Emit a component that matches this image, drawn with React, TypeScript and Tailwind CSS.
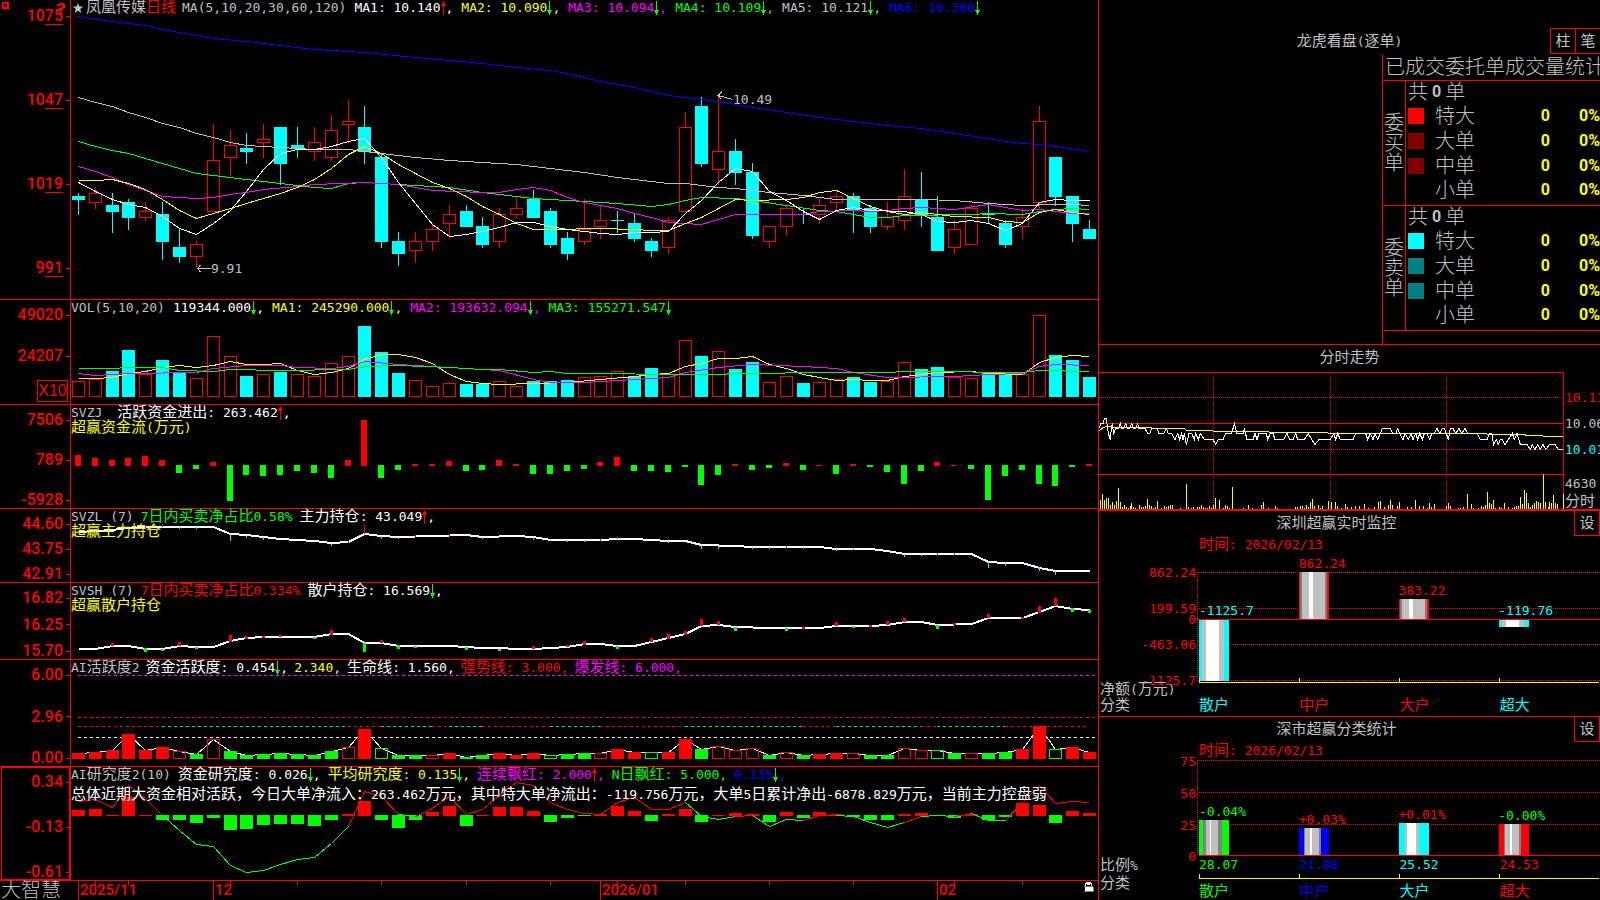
import React from 'react'

// Horizontal layout of the k-line charts
const LEFT = 71
const WIDTH = 1027
const X = (i: number) => Math.floor(78.44 + 16.852 * i)

const RED = '#ff0000'
const GREEN = '#00ff00'
const CYAN = '#00ffff'
const YELLOW = '#ffff00'
const MAGENTA = '#ff00ff'
const BLUE = '#0000ff'
const SILVER = '#c0c0c0'
const GRAY = '#808080'
const WHITE = '#ffffff'

// r = rising (hollow), c = falling (solid)
const CANDLE_DIR = 'crccrccrrrcrccrrrcccrrrccrrcccrrcccrrcrccrrcrrccrrccrrccrrccc'
const VOLUME_DIR = CANDLE_DIR.split('').map((d, i) => (i === 0 || i === 13 || i === 32 ? 'r' : d))

// high, body top, body bottom, low
const CANDLES = [
  [193, 196, 200, 215], [187, 193, 203, 209], [193, 205, 212, 233], [199, 202, 218, 230], [202, 211, 218, 221],
  [202, 214, 242, 260], [229, 247, 257, 263], [241, 244, 257, 268], [124, 160, 212, 212], [130, 145, 158, 176],
  [133, 148, 152, 164], [124, 139, 143, 158], [127, 127, 164, 185], [127, 145, 149, 158], [127, 142, 152, 161],
  [115, 130, 158, 161], [100, 121, 125, 143], [106, 127, 152, 164], [154, 157, 242, 248], [232, 241, 254, 266],
  [232, 241, 251, 263], [223, 229, 242, 251], [205, 214, 224, 239], [205, 211, 227, 227], [217, 226, 245, 248],
  [208, 214, 242, 248], [196, 208, 215, 218], [190, 199, 218, 218], [208, 211, 245, 248], [232, 238, 254, 260],
  [199, 229, 242, 245], [206, 220, 227, 239], [211, 220, 221, 233], [214, 223, 239, 242], [238, 241, 251, 257],
  [217, 220, 248, 254], [112, 127, 212, 212], [97, 106, 164, 167], [95, 151, 170, 185], [139, 151, 173, 185],
  [163, 172, 236, 239], [226, 226, 242, 248], [206, 208, 227, 236], [208, 214, 215, 224], [199, 205, 215, 224],
  [193, 196, 203, 211], [193, 196, 211, 233], [205, 208, 227, 233], [202, 217, 227, 230], [169, 196, 221, 230],
  [172, 199, 215, 227], [196, 217, 251, 251], [220, 229, 248, 254], [205, 208, 245, 245], [202, 214, 215, 223],
  [220, 223, 245, 248], [208, 217, 227, 239], [106, 121, 203, 208], [157, 157, 197, 206], [196, 196, 224, 242],
  [220, 229, 239, 239],
]

const VOLUMES = [
  381, 379, 371, 350, 374, 360, 373, 378, 336, 356, 376, 374, 372, 374, 376, 363, 356, 326, 352, 373, 380, 386, 383,
  384, 384, 381, 386, 381, 381, 380, 377, 376, 371, 376, 368, 374, 340, 356, 351, 369, 362, 382, 376, 383, 382, 379,
  377, 382, 381, 362, 369, 367, 377, 378, 372, 372, 374, 315, 355, 360, 377,
]

const FLOW = [
  455, 458, 460, 458, 456, 460, 473, 469, 462, 501, 475, 476, 475, 471, 473, 478, 460, 420, 478, 470, 464, 464, 461,
  471, 470, 460, 464, 474, 474, 471, 469, 462, 457, 471, 471, 472, 467, 485, 475, 464, 470, 468, 463, 470, 465, 474,
  464, 467, 472, 484, 471, 462, 465, 469, 500, 476, 470, 484, 486, 467, 464,
]

// R / G solid, r / g outlined
const ACTIVE_KIND = 'RRRRRRrGrGGGGGGGrRgGGrRGGRRRgGGrRRgRRGrrrGrGRRrGGrrgGrGGRRgRR'
const ACTIVE = [
  753, 752, 750, 734, 750, 747, 751, 754, 739, 751, 755, 754, 753, 754, 755, 751, 747, 729, 748, 755, 755, 755, 753,
  757, 755, 753, 755, 753, 755, 754, 753, 753, 749, 752, 752, 752, 739, 749, 746, 750, 748, 755, 752, 755, 754, 753,
  753, 755, 755, 748, 750, 750, 753, 753, 753, 752, 749, 726, 749, 747, 752,
]

const RESEARCH = [
  810, 809, 815, 797, 815, 820, 820, 823, 818, 830, 829, 825, 824, 824, 826, 820, 814, 801, 820, 828, 820, 812, 806,
  826, 815, 807, 807, 811, 822, 818, 816, 814, 806, 811, 821, 814, 809, 822, 815, 813, 814, 822, 812, 818, 812, 814,
  817, 820, 820, 814, 813, 816, 818, 814, 820, 817, 803, 805, 823, 811, 813,
]
const RESEARCH_LINE = [
  801, 799, 807, 785, 798, 815, 830, 844, 846, 865, 872, 870, 864, 859, 857, 843, 826, 791, 796, 814, 816, 808, 796,
  814, 809, 795, 782, 785, 802, 809, 813, 814, 802, 797, 809, 809, 802, 816, 819, 816, 815, 826, 819, 820, 815, 815,
  816, 822, 827, 822, 816, 815, 816, 813, 820, 820, 802, 785, 803, 801, 802,
]

type Pair = [number, number]

const MA: { color: string; points: Pair[] }[] = [
  {
    color: BLUE,
    points: [[0, 16], [2, 21], [4, 25], [5, 29], [6, 32], [7, 35], [8, 38], [10, 41], [12, 45], [14, 49], [17, 52], [20, 57], [22, 60], [24, 63], [26, 67], [28, 70], [29, 73], [31, 81], [33, 87], [35, 95], [36, 97], [37, 99], [38, 101], [40, 107], [42, 112], [44, 117], [46, 121], [48, 125], [50, 128], [52, 133], [54, 138], [55, 141], [56, 143], [57, 144], [58, 146], [60, 151]],
  },
  {
    color: SILVER,
    points: [[0, 97], [1, 102], [2, 106], [3, 112], [4, 117], [5, 123], [6, 127], [7, 133], [8, 137], [9, 142], [10, 145], [12, 147], [14, 149], [16, 149], [17, 151], [18, 153], [20, 157], [22, 160], [24, 162], [26, 164], [28, 168], [30, 172], [32, 177], [34, 181], [35, 183], [36, 183], [38, 187], [39, 188], [41, 192], [43, 195], [45, 199], [50, 199], [52, 200], [54, 203], [56, 205], [58, 204], [59, 204], [60, 205]],
  },
  {
    color: GREEN,
    points: [[0, 141], [1, 146], [2, 150], [3, 153], [4, 158], [5, 163], [6, 168], [7, 173], [8, 175], [10, 179], [12, 183], [14, 187], [15, 188], [16, 183], [17, 182], [18, 183], [20, 185], [22, 187], [24, 192], [26, 196], [27, 198], [28, 199], [30, 201], [32, 203], [34, 206], [35, 204], [36, 200], [37, 197], [39, 198], [40, 200], [42, 205], [44, 210], [45, 211], [46, 214], [47, 217], [48, 217], [49, 215], [53, 214], [54, 213], [56, 214], [57, 211], [58, 209], [59, 208], [60, 209]],
  },
  {
    color: MAGENTA,
    points: [[0, 166], [1, 171], [2, 177], [3, 184], [4, 190], [5, 196], [6, 197], [7, 198], [8, 197], [9, 194], [10, 192], [11, 189], [13, 186], [14, 184], [17, 182], [19, 184], [21, 190], [24, 192], [25, 192], [26, 189], [27, 187], [28, 190], [29, 197], [30, 202], [32, 208], [33, 213], [34, 217], [35, 222], [37, 224], [38, 219], [39, 214], [43, 214], [44, 211], [46, 210], [47, 211], [48, 210], [49, 208], [50, 207], [52, 209], [54, 204], [55, 207], [56, 210], [57, 209], [58, 211], [59, 213], [60, 213]],
  },
  {
    color: YELLOW,
    points: [[0, 180], [1, 180], [2, 179], [3, 183], [4, 189], [5, 199], [6, 210], [7, 218], [8, 213], [9, 208], [10, 203], [11, 198], [12, 193], [13, 187], [14, 179], [15, 168], [16, 154], [17, 146], [18, 153], [19, 164], [20, 173], [21, 182], [22, 188], [23, 196], [24, 206], [25, 214], [26, 223], [27, 229], [29, 229], [30, 228], [31, 228], [33, 229], [34, 230], [35, 230], [36, 223], [37, 217], [38, 208], [39, 199], [40, 200], [42, 199], [43, 197], [44, 192], [45, 190], [46, 198], [47, 206], [48, 211], [49, 214], [50, 212], [51, 214], [52, 216], [54, 217], [55, 221], [56, 222], [57, 212], [58, 209], [59, 212], [60, 214]],
  },
  {
    color: WHITE,
    points: [[0, 182], [1, 191], [2, 199], [3, 204], [4, 207], [5, 216], [6, 228], [7, 234], [8, 223], [9, 210], [10, 191], [11, 169], [12, 153], [13, 149], [14, 149], [15, 146], [16, 141], [17, 138], [18, 157], [19, 182], [20, 203], [21, 224], [22, 236], [23, 234], [24, 231], [25, 227], [26, 222], [27, 222], [28, 226], [29, 229], [30, 231], [31, 233], [32, 234], [33, 232], [34, 232], [35, 231], [36, 213], [37, 200], [38, 182], [39, 168], [40, 171], [41, 191], [42, 200], [43, 211], [44, 219], [45, 210], [46, 207], [47, 210], [49, 211], [50, 214], [51, 221], [52, 222], [53, 220], [54, 223], [55, 230], [56, 223], [57, 202], [58, 199], [59, 200], [60, 200]],
  },
]

const VOLUME_MA: { color: string; points: Pair[] }[] = [
  {
    color: YELLOW,
    points: [[0, 378], [1, 378], [2, 377], [3, 373], [4, 371], [5, 367], [6, 365], [7, 367], [8, 365], [9, 361], [10, 364], [11, 364], [12, 363], [13, 370], [14, 374], [15, 372], [16, 368], [17, 359], [18, 354], [19, 354], [20, 357], [21, 363], [22, 374], [23, 381], [24, 383], [25, 384], [27, 383], [29, 382], [31, 379], [33, 376], [34, 374], [35, 373], [36, 366], [37, 363], [38, 358], [39, 358], [40, 356], [41, 364], [42, 368], [43, 374], [44, 377], [45, 380], [46, 379], [47, 380], [48, 380], [49, 376], [50, 374], [51, 372], [53, 371], [54, 373], [56, 374], [57, 362], [58, 357], [59, 355], [60, 356]],
  },
  {
    color: MAGENTA,
    points: [[0, 373], [1, 375], [3, 373], [7, 372], [8, 368], [10, 365], [12, 365], [13, 367], [15, 368], [16, 366], [17, 361], [19, 364], [22, 367], [24, 369], [25, 370], [27, 379], [28, 382], [30, 382], [32, 380], [34, 378], [35, 377], [36, 372], [38, 367], [40, 364], [43, 366], [45, 368], [46, 372], [48, 377], [52, 376], [54, 374], [56, 373], [57, 366], [58, 364], [60, 365]],
  },
  {
    color: GREEN,
    points: [[0, 368], [2, 368], [3, 367], [5, 367], [6, 370], [8, 371], [9, 369], [12, 370], [16, 369], [17, 366], [19, 365], [22, 367], [24, 369], [25, 369], [27, 372], [28, 371], [29, 373], [37, 374], [40, 373], [44, 372], [47, 372], [50, 371], [56, 372], [57, 370], [60, 371]],
  },
]

const MAIN_HOLD: Pair[] = [[0, 532], [2, 530], [3, 528], [4, 527], [8, 527], [9, 534], [10, 535], [12, 539], [14, 541], [15, 543], [16, 542], [17, 534], [18, 536], [19, 537], [21, 536], [23, 535], [24, 537], [26, 536], [27, 537], [28, 540], [31, 540], [32, 539], [33, 539], [35, 541], [36, 541], [37, 545], [39, 546], [40, 547], [44, 547], [45, 549], [47, 549], [48, 551], [49, 554], [53, 554], [54, 562], [55, 563], [56, 563], [57, 568], [58, 571], [60, 571]]
const MAIN_TICKS: [number, number, number, string][] = [
  [1, 531, 532, RED], [4, 525, 528, RED], [5, 524, 527, RED], [6, 527, 529, CYAN], [7, 527, 529, CYAN],
  [9, 534, 541, CYAN], [10, 535, 538, CYAN], [11, 537, 540, CYAN], [15, 543, 546, CYAN], [16, 541, 543, RED],
  [17, 525, 534, RED], [18, 536, 539, CYAN], [19, 537, 539, CYAN], [20, 535, 537, RED], [22, 534, 536, RED],
  [24, 537, 539, CYAN], [27, 537, 540, CYAN], [28, 539, 541, CYAN], [29, 540, 542, CYAN], [30, 540, 542, CYAN],
  [31, 539, 541, RED], [32, 536, 539, RED], [35, 541, 543, CYAN], [37, 545, 549, CYAN], [38, 546, 549, CYAN],
  [40, 547, 549, CYAN], [41, 547, 549, CYAN], [42, 546, 548, RED], [43, 547, 549, CYAN], [45, 549, 551, CYAN],
  [46, 549, 550, RED], [49, 554, 557, CYAN], [50, 554, 556, CYAN], [51, 553, 555, RED], [52, 553, 555, RED],
  [54, 561, 568, CYAN], [55, 563, 566, CYAN], [57, 567, 571, CYAN], [58, 571, 575, CYAN],
]

const RETAIL_HOLD: Pair[] = [[0, 649], [1, 649], [2, 646], [3, 646], [4, 649], [5, 649], [6, 646], [7, 647], [8, 647], [9, 641], [10, 638], [11, 637], [14, 637], [15, 634], [16, 634], [17, 643], [18, 643], [19, 646], [22, 646], [24, 648], [27, 649], [28, 648], [29, 647], [30, 644], [31, 644], [32, 646], [33, 646], [34, 642], [35, 638], [36, 634], [37, 626], [38, 625], [39, 627], [41, 628], [44, 628], [45, 626], [47, 626], [48, 625], [49, 622], [50, 622], [51, 625], [53, 624], [54, 618], [56, 618], [57, 612], [58, 606], [59, 609], [60, 610]]
const RETAIL_TICKS: [number, number, number, string][] = [
  [2, 643, 646, RED], [4, 648, 652, GREEN], [5, 649, 651, GREEN], [6, 642, 646, RED], [7, 647, 649, GREEN],
  [9, 635, 642, RED], [10, 636, 639, RED], [11, 636, 638, RED], [12, 635, 637, RED], [14, 637, 639, GREEN],
  [15, 630, 635, RED], [17, 643, 652, GREEN], [18, 640, 643, RED], [19, 645, 649, GREEN], [20, 646, 648, GREEN],
  [23, 647, 650, GREEN], [25, 649, 651, GREEN], [27, 646, 649, RED], [29, 645, 647, RED], [30, 641, 645, RED],
  [32, 646, 649, GREEN], [34, 638, 642, RED], [35, 634, 639, RED], [36, 631, 635, RED], [37, 619, 626, RED],
  [38, 621, 625, RED], [39, 627, 631, GREEN], [42, 628, 631, GREEN], [43, 627, 629, RED], [45, 622, 626, RED],
  [46, 626, 628, GREEN], [47, 625, 627, RED], [48, 621, 625, RED], [49, 618, 622, RED], [51, 625, 629, GREEN],
  [52, 623, 625, RED], [54, 614, 618, RED], [56, 617, 619, RED], [57, 606, 613, RED], [58, 598, 606, RED],
  [59, 608, 612, GREEN], [60, 610, 613, GREEN],
]

// colour changes of the middle dashed line
const SWITCHES: [number, number, string][] = [
  [0, 5, RED], [5, 16, GREEN], [16, 18, RED], [18, 21, GREEN], [21, 22, RED], [22, 24, GREEN], [24, 28, RED],
  [28, 31, GREEN], [31, 36, RED], [36, 43, GREEN], [43, 45, RED], [45, 50, GREEN], [50, 51, RED], [51, 55, GREEN],
  [55, 60, RED],
]

const GREEN_SPANS: Pair[] = [[5, 16], [19, 20], [36, 39], [40, 43], [45, 49], [50, 52], [53, 55]]

const INTRADAY: Pair[] = [[11, 5], [18, 6], [25, 6], [28, 7], [34, 7], [36, 6], [40, 4], [46, 3], [49, 5], [52, 6], [56, 4], [62, 5], [70, 5], [76, 6], [80, 5], [86, 5], [92, 6], [98, 5], [104, 5], [110, 6], [116, 5], [122, 5], [128, 6], [132, 5], [150, 5], [158, 4], [164, 4], [170, 5], [186, 5], [192, 4], [206, 4], [214, 5], [220, 4], [230, 4], [240, 3], [248, 4], [254, 3], [260, 4], [264, 3], [268, 4], [274, 2], [282, 4], [290, 4], [298, 3], [302, 4], [310, 3], [316, 4], [328, 3], [354, 3], [362, 2], [370, 3], [384, 3], [392, 4], [410, 4], [418, 6], [426, 4], [434, 4], [444, 4], [448, 5], [456, 3], [474, 3], [480, 4], [486, 3], [492, 4], [514, 4], [518, 3], [526, 4], [534, 4], [540, 3], [566, 3], [576, 4], [584, 3], [594, 3], [602, 4], [608, 3], [628, 3], [640, 4], [650, 3], [660, 2], [672, 3], [706, 3], [716, 4], [722, 3], [728, 4], [736, 3], [774, 3], [782, 4], [812, 4], [818, 3], [826, 4], [834, 3], [840, 4], [848, 3], [856, 4], [862, 5], [886, 5], [894, 4], [902, 4], [908, 5], [914, 4], [924, 3], [930, 4], [940, 3], [948, 4], [954, 3], [962, 4], [968, 3], [974, 4], [982, 3], [988, 4], [996, 4], [1004, 3], [1010, 4], [1018, 4], [1026, 5], [1034, 4], [1042, 5], [1048, 5], [1054, 4], [1060, 3], [1066, 5], [1074, 5], [1082, 4], [1092, 5], [1100, 4], [1110, 5], [1118, 4], [1146, 4], [1156, 3], [1176, 3], [1184, 4], [1190, 4], [1196, 2], [1204, 3], [1210, 2], [1216, 3], [1222, 3], [1230, 2], [1240, 3], [1252, 4], [1258, 3], [1266, 4], [1276, 2], [1296, 2], [1306, 1], [1312, 2], [1320, 1], [1328, 2], [1336, 1], [1344, 2], [1352, 1], [1364, 2], [1380, 2], [1390, 1], [1404, 1]]
const AVERAGE: Pair[] = [[11, 275], [24, 262], [36, 258], [60, 262], [168, 262], [172, 265], [268, 265], [276, 271], [352, 271], [358, 274], [520, 274], [524, 277], [698, 277], [702, 280], [1174, 280], [1178, 283], [1290, 283], [1294, 287], [1342, 287], [1346, 289], [1404, 289]]
const MINUTE_VOLUME: Pair[] = [[16, 480], [22, 462], [28, 480], [34, 474], [40, 474], [46, 495], [52, 486], [58, 495], [64, 483], [70, 444], [76, 486], [82, 501], [88, 495], [94, 501], [100, 504], [106, 498], [109, 489], [116, 501], [122, 504], [134, 495], [140, 501], [146, 501], [152, 498], [158, 477], [164, 495], [170, 498], [176, 504], [182, 501], [188, 483], [200, 504], [208, 498], [214, 501], [220, 498], [226, 495], [232, 495], [256, 504], [274, 432], [280, 501], [290, 504], [296, 501], [306, 501], [312, 501], [319, 495], [325, 501], [331, 504], [337, 504], [343, 498], [349, 504], [355, 495], [361, 474], [373, 480], [385, 504], [391, 495], [397, 498], [403, 504], [413, 441], [445, 504], [460, 495], [472, 504], [500, 496], [505, 486], [520, 504], [541, 498], [547, 504], [601, 501], [607, 501], [615, 498], [622, 498], [628, 504], [634, 495], [640, 501], [646, 486], [652, 477], [658, 498], [670, 495], [676, 504], [682, 498], [700, 483], [709, 486], [721, 486], [727, 498], [738, 504], [750, 492], [758, 501], [768, 501], [780, 498], [792, 498], [808, 492], [820, 504], [838, 501], [850, 486], [856, 483], [868, 501], [880, 495], [886, 480], [892, 495], [908, 498], [914, 486], [938, 501], [950, 501], [962, 480], [974, 498], [986, 498], [998, 504], [1004, 489], [1010, 501], [1018, 492], [1054, 498], [1060, 489], [1066, 498], [1090, 504], [1096, 504], [1105, 501], [1117, 462], [1130, 492], [1136, 504], [1150, 504], [1160, 498], [1166, 501], [1172, 495], [1177, 456], [1183, 489], [1189, 492], [1195, 480], [1201, 504], [1213, 501], [1219, 504], [1229, 489], [1240, 501], [1252, 504], [1258, 501], [1264, 498], [1270, 498], [1276, 471], [1282, 492], [1288, 450], [1294, 459], [1300, 489], [1306, 501], [1312, 495], [1318, 489], [1324, 483], [1330, 486], [1336, 489], [1345, 402], [1351, 486], [1360, 501], [1363, 486], [1369, 489], [1375, 465], [1381, 489], [1387, 492], [1404, 462]]

// Chinese glyphs are larger than the monospace ones next to them
const Txt = ({ children, className = '' }: { children: string; className?: string }) => (
  <span className={`whitespace-pre ${className}`}>
    {children.split(/([\x20-\x7f]+)/).map((part, i) =>
      i % 2 ? (
        <span key={i} className="text-[13px]">
          {part}
        </span>
      ) : (
        part
      ),
    )}
  </span>
)

const Arrow = ({ up = false }: { up?: boolean }) => (
  <svg width="5" height="14" viewBox="0 0 5 14" className="shrink-0" shapeRendering="crispEdges">
    {up ? (
      <path d="M2 0h1v14h-1zM1 2h3v2h-3zM0 4h5v1h-5z" fill={RED} />
    ) : (
      <path d="M2 0h1v14h-1zM0 9h5v1h-5zM1 10h3v2h-3z" fill={GREEN} />
    )}
  </svg>
)

const Reading = ({
  text,
  color,
  arrow,
  last,
}: {
  text: string
  color: string
  arrow: 'up' | 'down'
  last?: boolean
}) => (
  <span className={`flex items-center ${color}`}>
    <Txt>{text}</Txt>
    <Arrow up={arrow === 'up'} />
    {!last && <Txt>,</Txt>}
  </span>
)

const Header = ({ children }: { children: React.ReactNode }) => (
  <div className="absolute inset-x-0 top-0 flex flex-col text-[15px] leading-[15px]">{children}</div>
)

const Line = ({ points, color, width = 1 }: { points: Pair[]; color: string; width?: number }) => (
  <polyline
    points={points.map(([i, y]) => `${X(i) + 0.5},${width === 2 ? y : y + 0.5}`).join(' ')}
    fill="none"
    stroke={color}
    strokeWidth={width}
  />
)

const Bar = ({ i, top, bottom, color, hollow }: { i: number; top: number; bottom: number; color: string; hollow?: boolean }) =>
  hollow ? (
    <rect x={X(i) - 5.5} y={top + 0.5} width={12} height={Math.max(bottom - top - 1, 1)} fill="none" stroke={color} />
  ) : (
    <rect x={X(i) - 6} y={top} width={13} height={Math.max(bottom - top, 1)} fill={color} />
  )

const AxisLabel = ({ text, underline }: { text: string; underline?: boolean }) => (
  <div className="relative flex h-4 items-center justify-end gap-[3px] font-['Roboto',sans-serif] text-base leading-4 font-medium text-[#ff0000]">
    {text}
    <i className="h-px w-1 bg-[#ff0000]" />
    {underline && <i className="absolute right-[7px] -bottom-px h-px w-[18px] bg-[#ff0000]" />}
  </div>
)

const Panel = ({
  top,
  height,
  className,
  axis,
  axisClass,
  header,
  label,
  children,
}: {
  top: number
  height: number
  className: string
  axis: React.ReactNode
  axisClass: string
  header: React.ReactNode
  label: string
  children: React.ReactNode
}) => (
  <section aria-label={label} className={`flex shrink-0 border-b border-[#ff0000] ${className}`}>
    <div className={`relative flex w-[71px] shrink-0 flex-col border-r border-[#ff0000] ${axisClass}`}>{axis}</div>
    <div className="relative min-w-0 flex-1">
      <svg
        className="block h-full w-full"
        viewBox={`${LEFT} ${top} ${WIDTH} ${height}`}
        preserveAspectRatio="none"
        shapeRendering="crispEdges"
      >
        {children}
      </svg>
      {header}
    </div>
  </section>
)

const MainChart = () => (
  <Panel
    label="日线"
    top={0}
    height={299}
    className="h-[300px]"
    axisClass="justify-between pt-2 pb-[23px]"
    axis={
      <>
        <svg className="absolute top-0 left-0" width="68" height="14" shapeRendering="crispEdges">
          <path d="M2 2h7v7h-7zM4 4v3h3v-3z" fillRule="evenodd" fill={RED} />
          <path d="M9 8h1v1h-1zM3 9h2v1h-2zM8 9h1v1h-1z" fill="#a00000" />
          <path d="M57 4h2v-1h5v1h1v4h-2v1h-2v2h-2v-3h2v-1h1v-2h-2v1h-3zM59 12h3v2h-3z" fill={RED} />
          <path d="M65 5h1v3h-1zM63 8h2v1h-2zM61 9h2v2h-2z" fill="#800000" />
        </svg>
        <AxisLabel text="1075" underline />
        <AxisLabel text="1047" underline />
        <AxisLabel text="1019" underline />
        <AxisLabel text="991" underline />
      </>
    }
    header={
      <>
        <Header>
          <div className="flex items-center gap-2">
            <span className="flex items-center pl-px text-[#c0c0c0]">
              <svg width="14" height="12" viewBox="0 0 14 12">
                <path d="M6 1l1.400 3.500h4l-3.200 2.500l1.200 4l-3.400-2.300l-3.400 2.300l1.200-4l-3.200-2.500h4z" fill={SILVER} />
              </svg>
              <Txt>凤凰传媒</Txt>
              <Txt className="text-[#ff0000]">日线</Txt>
              <Txt className="ml-[6px]">MA(5,10,20,30,60,120)</Txt>
            </span>
            <Reading text="MA1: 10.140" color="text-white" arrow="up" />
            <Reading text="MA2: 10.090" color="text-[#ffff00]" arrow="down" />
            <Reading text="MA3: 10.094" color="text-[#ff00ff]" arrow="down" />
            <Reading text="MA4: 10.109" color="text-[#00ff00]" arrow="down" />
            <Reading text="MA5: 10.121" color="text-[#c0c0c0]" arrow="down" />
            <Reading text="MA6: 10.300" color="text-[#0000ff]" arrow="down" last />
          </div>
        </Header>
        <span className="absolute text-[13px] leading-4 text-[#c0c0c0]" style={{ left: `${(14000 / WIDTH).toFixed(2)}%`, top: 261 }}>
          9.91
        </span>
        <span className="absolute text-[13px] leading-4 text-[#c0c0c0]" style={{ left: `${(66200 / WIDTH).toFixed(2)}%`, top: 92 }}>
          10.49
        </span>
      </>
    }
  >
    {CANDLES.map(([high, top, bottom, low], i) => {
      const up = CANDLE_DIR[i] === 'r'
      const color = up ? RED : CYAN
      return (
        <g key={i}>
          <rect x={X(i)} y={high} width={1} height={top - high} fill={color} />
          <rect x={X(i)} y={bottom} width={1} height={low - bottom} fill={color} />
          <Bar i={i} top={top} bottom={bottom} color={color} hollow={up} />
        </g>
      )
    })}
    {MA.map((m) => (
      <Line key={m.color} points={m.points} color={m.color} />
    ))}
    <path d="M197 268.500h14M200.500 265l-3 3.500l3 3.500M718.500 95.500l14 4M722 91.500l-4 4l3.500 4" fill="none" stroke={SILVER} />
  </Panel>
)

const VolumeChart = () => (
  <Panel
    label="VOL"
    top={300}
    height={104}
    className="h-[105px]"
    axisClass="pt-[7px]"
    axis={
      <>
        <AxisLabel text="49020" />
        <div className="mt-[25px]">
          <AxisLabel text="24207" />
        </div>
        <div className="mt-4 mr-[2px] h-[22px] w-[31px] self-end border border-[#ff0000] text-center font-['Liberation_Sans',sans-serif] text-base leading-5 text-[#ff0000]">
          X10
        </div>
      </>
    }
    header={
      <Header>
        <div className="flex items-center gap-2">
          <Txt className="text-[#c0c0c0]">VOL(5,10,20)</Txt>
          <Reading text="119344.000" color="text-white" arrow="down" />
          <Reading text="MA1: 245290.000" color="text-[#ffff00]" arrow="down" />
          <Reading text="MA2: 193632.094" color="text-[#ff00ff]" arrow="down" />
          <Reading text="MA3: 155271.547" color="text-[#00ff00]" arrow="down" last />
        </div>
      </Header>
    }
  >
    {VOLUMES.map((top, i) => (
      <Bar key={i} i={i} top={top} bottom={397} color={VOLUME_DIR[i] === 'r' ? RED : CYAN} hollow={VOLUME_DIR[i] === 'r'} />
    ))}
    {VOLUME_MA.map((m) => (
      <Line key={m.color} points={m.points} color={m.color} />
    ))}
  </Panel>
)

const FlowChart = () => (
  <Panel
    label="SVZJ"
    top={405}
    height={103}
    className="h-[104px]"
    axisClass="justify-between pt-[7px]"
    axis={
      <>
        <AxisLabel text="7506" />
        <AxisLabel text="789" />
        <AxisLabel text="-5928" />
      </>
    }
    header={
      <Header>
        <div className="flex items-center gap-[15px]">
          <Txt className="text-[#c0c0c0]">SVZJ</Txt>
          <Reading text="活跃资金进出: 263.462" color="text-white" arrow="up" />
        </div>
        <Txt className="text-[#ffff00]">超赢资金流(万元)</Txt>
      </Header>
    }
  >
    {FLOW.map((y, i) =>
      y < 466 ? (
        <rect key={i} x={X(i) - 3} y={y} width={6} height={466 - y} fill={RED} />
      ) : (
        <rect key={i} x={X(i) - 3} y={465} width={6} height={y - 465} fill={GREEN} />
      ),
    )}
  </Panel>
)

const MainHoldChart = () => (
  <Panel
    label="SVZL"
    top={509}
    height={73}
    className="h-[74px]"
    axisClass="justify-between pt-[7px]"
    axis={
      <>
        <AxisLabel text="44.60" />
        <AxisLabel text="43.75" />
        <AxisLabel text="42.91" />
      </>
    }
    header={
      <Header>
        <div className="flex items-center gap-[7px]">
          <Txt className="text-[#c0c0c0]">SVZL (7)</Txt>
          <Txt className="text-[#00ff00]">7日内买卖净占比0.58%</Txt>
          <Reading text="主力持仓: 43.049" color="text-white" arrow="up" />
        </div>
        <Txt className="text-[#ffff00]">超赢主力持仓</Txt>
      </Header>
    }
  >
    <Line points={MAIN_HOLD} color={WHITE} width={2} />
    {MAIN_TICKS.map(([i, y1, y2, color]) => (
      <rect key={i} x={X(i)} y={y1} width={1} height={y2 - y1} fill={color} />
    ))}
  </Panel>
)

const RetailHoldChart = () => (
  <Panel
    label="SVSH"
    top={583}
    height={76}
    className="h-[77px]"
    axisClass="justify-between pt-[7px]"
    axis={
      <>
        <AxisLabel text="16.82" />
        <AxisLabel text="16.25" />
        <AxisLabel text="15.70" />
      </>
    }
    header={
      <Header>
        <div className="flex items-center gap-[7px]">
          <Txt className="text-[#c0c0c0]">SVSH (7)</Txt>
          <Txt className="text-[#ff0000]">7日内买卖净占比0.334%</Txt>
          <Reading text="散户持仓: 16.569" color="text-white" arrow="down" />
        </div>
        <Txt className="text-[#ffff00]">超赢散户持仓</Txt>
      </Header>
    }
  >
    <Line points={RETAIL_HOLD} color={WHITE} width={2} />
    {RETAIL_TICKS.map(([i, y1, y2, color]) => (
      <rect key={i} x={X(i) - 1} y={y1} width={3} height={y2 - y1} fill={color} />
    ))}
  </Panel>
)

const ActiveChart = () => (
  <Panel
    label="AI活跃度2"
    top={660}
    height={106}
    className="h-[107px]"
    axisClass="justify-between pt-[7px]"
    axis={
      <>
        <AxisLabel text="6.00" />
        <AxisLabel text="2.96" />
        <AxisLabel text="0.00" />
      </>
    }
    header={
      <Header>
        <div className="flex items-center gap-[6px]">
          <Txt className="text-[#c0c0c0]">AI活跃度2</Txt>
          <Reading text="资金活跃度: 0.454" color="text-white" arrow="down" />
          <Txt className="text-[#ffff00]">2.340,</Txt>
          <Txt className="text-white">生命线: 1.560,</Txt>
          <Txt className="text-[#ff0000]">强势线: 3.000,</Txt>
          <Txt className="text-[#ff00ff]">爆发线: 6.000,</Txt>
        </div>
      </Header>
    }
  >
    <path d="M78 675.500H1096" stroke={MAGENTA} strokeDasharray="3 3" />
    <path d="M78 717.500H1096" stroke={RED} strokeDasharray="3 3" />
    <path d="M78 737.500H1096" stroke={WHITE} strokeDasharray="3 3" />
    {SWITCHES.map(([from, to, color]) => (
      <path key={from} d={`M${X(from)} 726.500H${X(to)}`} stroke={color} strokeDasharray="3 3" />
    ))}
    <Line points={ACTIVE.map((y, i) => [i, y] as Pair)} color={WHITE} />
    {ACTIVE.map((top, i) => {
      const kind = ACTIVE_KIND[i]
      return (
        <Bar
          key={i}
          i={i}
          top={top}
          bottom={759}
          color={kind.toUpperCase() === 'R' ? RED : GREEN}
          hollow={kind === 'r' || kind === 'g'}
        />
      )
    })}
  </Panel>
)

const ResearchChart = () => (
  <Panel
    label="AI研究度2"
    top={767}
    height={113}
    className="h-[114px]"
    axisClass="justify-between pt-[7px]"
    axis={
      <>
        <div className="absolute inset-0 ml-px border border-[#ff0000]" />
        <AxisLabel text="0.34" />
        <AxisLabel text="-0.13" />
        <AxisLabel text="-0.61" />
      </>
    }
    header={
      <Header>
        <div className="flex items-center gap-[7px]">
          <Txt className="text-[#c0c0c0]">AI研究度2(10)</Txt>
          <Reading text="资金研究度: 0.026" color="text-white" arrow="down" />
          <Reading text="平均研究度: 0.135" color="text-[#ffff00]" arrow="down" />
          <Reading text="连续飘红: 2.000" color="text-[#ff00ff]" arrow="up" />
          <Txt className="text-[#00ff00]">N日飘红: 5.000,</Txt>
          <Reading text="0.135" color="text-[#0000ff]" arrow="down" />
        </div>
        <p className="mt-[5px]">
          <Txt className="text-white">
            总体近期大资金相对活跃，今日大单净流入：263.462万元，其中特大单净流出：-119.756万元，大单5日累计净出-6878.829万元，当前主力控盘弱
          </Txt>
        </p>
      </Header>
    }
  >
    {RESEARCH.map((y, i) =>
      y < 816 ? (
        <Bar key={i} i={i} top={y} bottom={816} color={RED} />
      ) : (
        <Bar key={i} i={i} top={815} bottom={y} color={GREEN} />
      ),
    )}
    <Line points={RESEARCH_LINE.map((y, i) => [i, y] as Pair)} color={RED} />
    {GREEN_SPANS.map(([from, to]) => (
      <Line
        key={from}
        points={RESEARCH_LINE.slice(from, to + 1).map((y, i) => [from + i, y] as Pair)}
        color={GREEN}
      />
    ))}
  </Panel>
)

const TimeAxis = () => (
  <div className="flex h-[19px] shrink-0">
    <div className="w-[71px] shrink-0 pl-px text-[20px] leading-[19px] font-light text-[#c0c0c0]">大智慧</div>
    <div className="relative min-w-0 flex-1 pl-[7px]">
      <svg
        className="absolute inset-0 h-full w-full"
        viewBox={`${LEFT} 881 ${WIDTH} 19`}
        preserveAspectRatio="none"
        shapeRendering="crispEdges"
      >
        {[95, 128, 230, 297, 381, 466, 550, 617, 685, 769, 853, 954, 1022].map((x) => (
          <rect key={x} x={x} y={881} width={1} height={4} fill={RED} />
        ))}
        <path d="M1086 882h5v1h1v3h-1v-2h-5v2h-1v-3h1zM1087 884h3v1h-3z" fill={WHITE} />
        <path d="M1085 887h8v4h-8z" fill={WHITE} />
        <path d="M1084 886h9v1h-9zM1093 887h1v5h-10v-1h9z" fill={GRAY} />
      </svg>
      <div className="grid h-full grid-cols-[135fr_387fr_337fr_161fr] font-['Roboto',sans-serif] text-[15px] leading-[19px] font-medium text-[#ff0000]">
        {['2025/11', '12', '2026/01', '02'].map((label) => (
          <span key={label} className="border-l border-[#ff0000] pl-px">
            {label}
          </span>
        ))}
      </div>
    </div>
  </div>
)

const ORDER_GROUPS = [
  { side: '委买单', swatches: ['bg-[#ff0000]', 'bg-[#800000]', 'bg-[#800000]', ''] },
  { side: '委卖单', swatches: ['bg-[#00ffff]', 'bg-[#008080]', 'bg-[#008080]', ''] },
]
const ORDER_SIZES = ['特大', '大单', '中单', '小单']

const OrderStats = () => (
  <section className="flex h-[345px] shrink-0 flex-col border-b border-[#ff0000] pt-7 text-[#c0c0c0]">
    <div className="grid h-[26px] shrink-0 grid-cols-[1fr_auto_1fr] items-center">
      <h2 className="col-start-2 text-[15px] leading-4">
        <Txt>龙虎看盘(逐单)</Txt>
      </h2>
      <div className="flex h-[26px] justify-self-end border-y border-[#ff0000] text-[15px]">
        <button className="w-[25px] border-l border-[#ff0000]">柱</button>
        <button className="w-[25px] border-l border-[#ff0000]">笔</button>
      </div>
    </div>
    <div className="w-[218px] flex-1 self-end overflow-hidden border-l border-[#ff0000] pl-px text-[20px]">
      <h3 className="h-[27px] border-b border-[#ff0000] pl-px leading-[26px] font-light whitespace-nowrap">已成交委托单成交量统计</h3>
      <table className="w-full table-fixed border-separate border-spacing-0 leading-5">
        <colgroup>
          <col className="w-[22px]" />
          <col className="w-[29px]" />
          <col />
          <col className="w-[52px]" />
          <col className="w-[50px]" />
        </colgroup>
        {ORDER_GROUPS.map((group) => (
          <tbody key={group.side}>
            <tr>
              <th rowSpan={5} className="border-r border-b border-[#ff0000] font-light">
                <span className="block w-5 break-all">{group.side}</span>
              </th>
              <th colSpan={4} className="h-[22px] pl-[2px] text-left font-light">
                <span className="flex h-5 items-center gap-1">
                  共<b className="font-['Roboto',sans-serif] text-base font-bold">0</b>单
                </span>
              </th>
            </tr>
            {ORDER_SIZES.map((size, i) => {
              const cell = i === 3 ? 'h-[28px] border-b border-[#ff0000] pb-[3px]' : 'h-[25px]'
              return (
                <tr key={size}>
                  <td className={`pl-[2px] ${cell}`}>
                    <div className={`h-4 w-4 ${group.swatches[i]}`} />
                  </td>
                  <th className={`text-left font-light ${cell}`}>{size}</th>
                  <td className={`text-right font-['Roboto',sans-serif] text-base leading-5 font-bold text-[#ffff00] ${cell}`}>0</td>
                  <td className={`text-right font-['Roboto',sans-serif] text-base leading-5 font-bold text-[#ffff00] ${cell}`}>0%</td>
                </tr>
              )
            })}
          </tbody>
        ))}
      </table>
    </div>
  </section>
)

const Intraday = () => {
  const toX = (x: number) => (x - 12) / 3
  return (
    <section className="shrink-0 border-b-2 border-[#ff0000] text-[15px] text-[#c0c0c0]">
      <h2 className="h-[27px] text-center leading-6">分时走势</h2>
      <div className="flex h-[137px]">
        <svg
          className="block h-full min-w-0 flex-1"
          viewBox="0 0 465 137"
          preserveAspectRatio="none"
          shapeRendering="crispEdges"
        >
          <path d="M0 25.500H464M0 77.500H464M114.500 0V137M231.500 0V137M347.500 0V137" stroke={RED} strokeDasharray="1 1" />
          <path d="M0 .5H464.500V137M0 51.500H464M0 102.500H464" fill="none" stroke={RED} />
          {MINUTE_VOLUME.map(([x, y]) => (
            <rect key={x} x={Math.floor(toX(x))} y={Math.round((y - 96) / 3)} width={1} height={137 - Math.round((y - 96) / 3)} fill={YELLOW} />
          ))}
          <polyline
            points={AVERAGE.map(([x, y]) => `${toX(x)},${Math.round((y - 97) / 3) + 0.5}`).join(' ')}
            fill="none"
            stroke={YELLOW}
          />
          <polyline
            points={INTRADAY.map(([x, tick]) => `${toX(x)},${Math.round(51 + (6 - tick) * 5.2) + 0.5}`).join(' ')}
            fill="none"
            stroke={WHITE}
          />
        </svg>
        <div className="flex w-9 flex-col overflow-hidden pt-[18px] pl-px text-[13px] leading-4">
          <span className="text-[#ff0000]">10.11</span>
          <span className="mt-[10px]">10.06</span>
          <span className="mt-[10px] text-[#00ffff]">10.01</span>
          <span className="mt-[18px]">4630</span>
          <span className="mt-px text-[15px]">分时</span>
        </div>
      </div>
    </section>
  )
}

type Cylinder = {
  name: string
  label: string
  labelClass: string
  nameClass: string
  value?: string
  top: number
  bottom: number
  labelTop: number
  bands: [number, string][]
}

const thin = (edge: string): [number, string][] => [[1, edge], [2, GRAY], [7, SILVER], [4, WHITE], [12, SILVER], [2, GRAY], [2, edge]]
const wide = (edge: string): [number, string][] => [[3, edge], [4, SILVER], [13, WHITE], [5, SILVER], [5, edge]]

const MONITOR: Cylinder[] = [
  { name: '散户', label: '-1125.7', labelClass: 'text-[#00ffff]', nameClass: 'text-[#00ffff]', top: 68, bottom: 129, labelTop: 51, bands: wide(CYAN) },
  { name: '中户', label: '862.24', labelClass: 'text-[#ff0000]', nameClass: 'text-[#ff0000]', top: 20, bottom: 67, labelTop: 4, bands: thin(RED) },
  { name: '大户', label: '383.22', labelClass: 'text-[#ff0000]', nameClass: 'text-[#ff0000]', top: 47, bottom: 67, labelTop: 31, bands: thin(RED) },
  { name: '超大', label: '-119.76', labelClass: 'text-[#00ffff]', nameClass: 'text-[#00ffff]', top: 68, bottom: 75, labelTop: 51, bands: wide(CYAN) },
]

const SHARES: Cylinder[] = [
  { name: '散户', label: '-0.04%', value: '28.07', labelClass: 'text-[#00ff00]', nameClass: 'text-[#00ff00]', top: 62, bottom: 97, labelTop: 46, bands: [[4, GREEN], [3, GRAY], [4, SILVER], [1, WHITE], [7, SILVER], [4, GRAY], [7, GREEN]] },
  { name: '中户', label: '+0.03%', value: '21.88', labelClass: 'text-[#ff0000]', nameClass: 'text-[#0000ff]', top: 70, bottom: 97, labelTop: 54, bands: [[5, BLUE], [1, GRAY], [5, SILVER], [2, WHITE], [7, SILVER], [2, GRAY], [8, BLUE]] },
  { name: '大户', label: '+0.01%', value: '25.52', labelClass: 'text-[#ff0000]', nameClass: 'text-[#00ffff]', top: 65, bottom: 97, labelTop: 49, bands: [[6, CYAN], [2, SILVER], [9, WHITE], [3, SILVER], [10, CYAN]] },
  { name: '超大', label: '-0.00%', value: '24.53', labelClass: 'text-[#00ff00]', nameClass: 'text-[#ff0000]', top: 66, bottom: 97, labelTop: 50, bands: [[5, RED], [1, GRAY], [5, SILVER], [2, WHITE], [7, SILVER], [2, GRAY], [8, RED]] },
]

const Cylinders = ({ items }: { items: Cylinder[] }) => (
  <>
    {items.map((item, n) => {
      let x = 2 + n * 100
      return (
        <g key={item.name}>
          {item.bands.map(([w, fill], i) => {
            const at = x
            x += w
            return <rect key={i} x={at} y={item.top} width={w} height={item.bottom - item.top} fill={fill} />
          })}
        </g>
      )
    })}
  </>
)

const CylinderLabels = ({ items }: { items: Cylinder[] }) => (
  <>
    {items.map((item, n) => (
      <span
        key={item.name}
        className={`absolute text-[13px] leading-4 ${item.labelClass}`}
        style={{ left: `calc(2px + ${n * 25}% - ${n}px)`, top: item.labelTop }}
      >
        {item.label}
      </span>
    ))}
  </>
)

const SectionHeader = ({ title }: { title: string }) => (
  <div className="flex h-[25px] shrink-0 text-[15px] text-[#c0c0c0]">
    <h2 className="flex-1 text-center leading-6">{title}</h2>
    <button aria-label={`${title} 设`} className="w-[26px] border-x border-b border-[#ff0000]">
      设
    </button>
  </div>
)

const Names = ({ items }: { items: Cylinder[] }) => (
  <div className="grid h-4 grid-cols-4 pl-[2px] text-[15px] leading-4">
    {items.map((item) => (
      <span key={item.name} className={item.nameClass}>
        {item.name}
      </span>
    ))}
  </div>
)

const Monitor = () => (
  <section className="shrink-0 border-b border-[#ff0000]">
    <SectionHeader title="深圳超赢实时监控" />
    <div className="flex h-[180px]">
      <div className="flex w-[98px] shrink-0 flex-col pt-[31px] text-[13px] leading-[11px] text-[#ff0000]">
        <span className="pr-px text-right">862.24</span>
        <span className="mt-[25px] pr-px text-right">199.59</span>
        <span className="pr-px text-right">0</span>
        <span className="mt-[14px] pr-px text-right">-463.06</span>
        <span className="mt-[25px] pr-px text-right">-1125.7</span>
        <Txt className="-mt-[2px] pl-px text-[15px] text-[#c0c0c0]">净额(万元)</Txt>
        <Txt className="mt-[5px] pl-px text-[15px] text-[#c0c0c0]">分类</Txt>
      </div>
      <div className="min-w-0 flex-1">
        <p className="h-4 pl-[2px] text-[15px] leading-4 text-[#ff0000]">
          <Txt>时间: 2026/02/13</Txt>
        </p>
        <div className="relative h-[132px]">
          <svg className="block h-full w-full" viewBox="0 0 403 132" preserveAspectRatio="none" shapeRendering="crispEdges">
            <path d="M0 20.500H403M0 56.500H403M0 92.500H403M0 128.500H403M.5 20V129" stroke={RED} strokeDasharray="1 1" />
            <path d="M0 67.500H403" stroke={RED} />
            <Cylinders items={MONITOR} />
            <path d="M2.500 126V130.500H402M102.500 126V130M202.500 126V130M302.500 126V130" fill="none" stroke={YELLOW} />
          </svg>
          <CylinderLabels items={MONITOR} />
        </div>
        <div className="mt-[13px]">
          <Names items={MONITOR} />
        </div>
      </div>
    </div>
  </section>
)

const Shares = () => (
  <section className="shrink-0">
    <SectionHeader title="深市超赢分类统计" />
    <div className="flex h-[158px]">
      <div className="flex w-[98px] shrink-0 flex-col pt-[14px] text-[13px] leading-[11px] text-[#ff0000]">
        <span className="pr-px text-right">75</span>
        <span className="mt-[21px] pr-px text-right">50</span>
        <span className="mt-[21px] pr-px text-right">25</span>
        <span className="mt-5 pr-px text-right">0</span>
        <Txt className="-mt-[2px] pl-px text-[15px] text-[#c0c0c0]">比例%</Txt>
        <Txt className="mt-[7px] pl-px text-[15px] text-[#c0c0c0]">分类</Txt>
      </div>
      <div className="min-w-0 flex-1">
        <p className="h-4 pl-[2px] text-[15px] leading-4 text-[#ff0000]">
          <Txt>时间: 2026/02/13</Txt>
        </p>
        <div className="relative h-[99px]">
          <svg className="block h-full w-full" viewBox="0 0 403 99" preserveAspectRatio="none" shapeRendering="crispEdges">
            <path d="M0 2.500H403M0 34.500H403M0 66.500H403M.5 2V97" stroke={RED} strokeDasharray="1 1" />
            <path d="M2 97.500H403" stroke={RED} />
            <Cylinders items={SHARES} />
          </svg>
          <CylinderLabels items={SHARES} />
        </div>
        <div className="grid grid-cols-4 pl-[2px] text-[13px] leading-4">
          {SHARES.map((item) => (
            <span key={item.name} className={item.nameClass}>
              {item.value}
            </span>
          ))}
        </div>
        <svg className="block h-[6px] w-full" viewBox="0 0 403 6" preserveAspectRatio="none" shapeRendering="crispEdges">
          <path d="M2.500 1V5.500H402M102.500 1V5M202.500 1V5M302.500 1V5" fill="none" stroke={YELLOW} />
        </svg>
        <div className="mt-1">
          <Names items={SHARES} />
        </div>
      </div>
    </div>
  </section>
)

const App = () => {
  return (
    <div className="flex min-h-screen overflow-hidden bg-black font-['DejaVu_Sans_Mono','Noto_Sans_CJK_SC',monospace]">
      {/* K-line column */}
      <main className="flex min-w-0 flex-1 flex-col border-r border-[#ff0000]">
        <MainChart />
        <VolumeChart />
        <FlowChart />
        <MainHoldChart />
        <RetailHoldChart />
        <ActiveChart />
        <ResearchChart />
        <TimeAxis />
      </main>

      {/* Order and fund statistics */}
      <aside className="flex w-[501px] shrink-0 flex-col overflow-hidden">
        <OrderStats />
        <Intraday />
        <Monitor />
        <Shares />
      </aside>
    </div>
  )
}

export default App
